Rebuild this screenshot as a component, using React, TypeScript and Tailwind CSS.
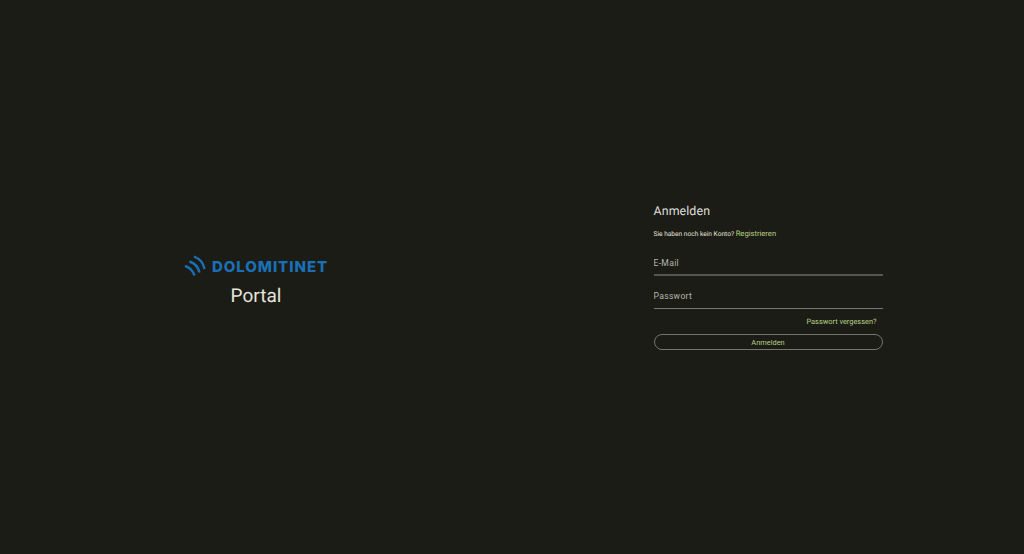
import React from 'react';

const Logo = () => (
  <div className="flex items-center h-[22px]">
    <svg width="22" height="22" viewBox="0 0 22 22" fill="none" stroke="#1a6fb5" strokeWidth="2.4" className="mr-[6px]">
      <path d="M1 11 Q8 13 10.5 20.5" />
      <path d="M5.5 6.5 Q13.5 9 15.5 17.5" />
      <path d="M10 1.5 Q19 5 20.5 14" />
    </svg>
    <span className="font-['Inter',sans-serif] font-extrabold text-[15px] leading-none text-[#1a6fb5] tracking-[0.95px]">DOLOMITINET</span>
  </div>
);

const Field = ({ label, type, line }: { label: string; type: string; line: string }) => (
  <label className={`block h-[33px] ${line}`}>
    <input
      type={type}
      placeholder={label}
      className="w-full h-[32px] pt-[9px] bg-transparent outline-none text-[8.6px] tracking-[0.3px] text-[#c8c8c0] placeholder:text-[#b5b5ac]"
    />
  </label>
);

export default function App() {
  return (
    <div className="grid grid-cols-2 w-full h-[554px] bg-[#1c1c16] font-['Roboto',sans-serif] [text-rendering:geometricPrecision]">
      <div className="flex flex-col items-center justify-center pt-[9px]">
        <Logo />
        <h1 className="mt-[7px] text-[19px] leading-[24px] text-[#e5e4da]">Portal</h1>
      </div>
      <div className="flex items-center justify-center">
        <form className="w-[229px]">
          <h2 className="text-[12.4px] leading-[18px] tracking-[0.1px] text-[#dededa]">Anmelden</h2>
          <p className="mt-[7px] text-[6.6px] leading-[12px] text-[#e5e4da]">
            Sie haben noch kein Konto? <a className="text-[7.6px] text-[#b6d083]">Registrieren</a>
          </p>
          <div className="mt-[3px]">
            <Field label="E-Mail" type="email" line="border-b-2 border-[#55564e]" />
            <Field label="Passwort" type="password" line="border-b border-[#77786f]" />
          </div>
          <div className="mt-[7px] pr-[6px] text-right text-[7.4px] leading-[12px] text-[#b6d083]">Passwort vergessen?</div>
          <button type="button" className="mt-[6px] w-full h-[16px] rounded-full border border-[#74766c] text-[7.4px] leading-none text-[#b6d083]">
            Anmelden
          </button>
        </form>
      </div>
    </div>
  );
}
